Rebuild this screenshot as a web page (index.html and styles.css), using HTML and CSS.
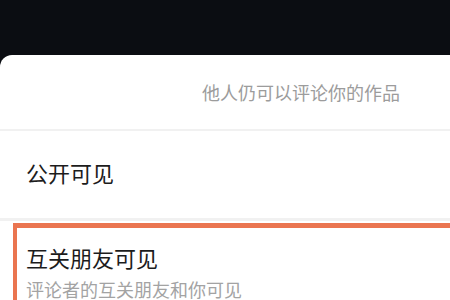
FILE: index.html
```html
<!DOCTYPE html>
<html lang="zh">
<head>
<meta charset="utf-8">
<link rel="stylesheet" href="styles.css">
</head>
<body>
<div class="backdrop"></div>
<div class="sheet">
  <div class="header">
    <span class="hint">他人仍可以评论你的作品</span>
  </div>
  <div class="divider thin"></div>
  <div class="option">
    <span class="title">公开可见</span>
  </div>
  <div class="divider thick"></div>
  <div class="selected">
    <div class="title">互关朋友可见</div>
    <div class="sub">评论者的互关朋友和你可见</div>
  </div>
</div>
</body>
</html>
```
FILE: styles.css
```css
html, body {
  margin: 0;
  padding: 0;
  height: 100%;
  overflow: hidden;
  background: #0b0d12;
  font-family: "Noto Sans CJK SC", "Noto Sans", sans-serif;
}
.backdrop {
  height: 55px;
}
.sheet {
  background: #ffffff;
  border-top-left-radius: 12px;
  height: 245px;
  display: flex;
  flex-direction: column;
}
.header {
  height: 74px;
  display: flex;
  align-items: center;
  justify-content: flex-end;
  padding-right: 50px;
}
.hint {
  font-size: 18px;
  color: #9c9c9c;
  line-height: 1;
}
.divider {
  background: #f1f1f1;
}
.divider.thin { height: 2px; }
.divider.thick { height: 3px; }
.option {
  height: 87px;
  box-sizing: border-box;
  padding-bottom: 6px;
  display: flex;
  align-items: center;
  padding-left: 26px;
}
.title {
  font-size: 22px;
  color: #1c1c1c;
  line-height: 1;
}
.selected {
  margin-top: 2px;
  margin-left: 13px;
  border-top: 5px solid #ea7550;
  border-left: 4px solid #ea7550;
  padding-left: 9px;
  padding-top: 18px;
  flex: 1;
}
.sub {
  margin-top: 12px;
  font-size: 18px;
  color: #a3a3a3;
  line-height: 1;
}
```
